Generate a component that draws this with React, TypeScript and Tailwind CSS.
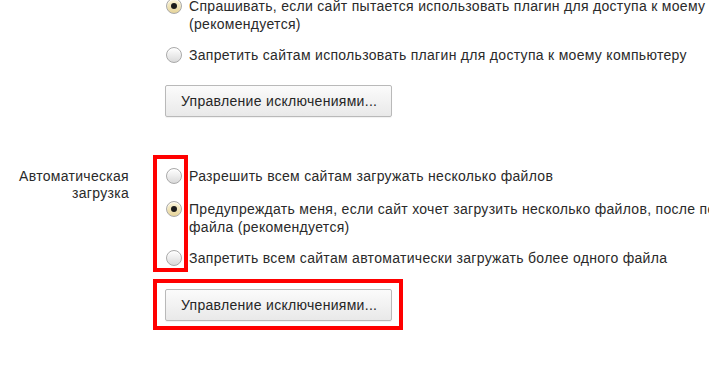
import type { ReactNode } from 'react';

type RadioProps = {
    checked?: boolean;
};

function Radio({ checked = false }: RadioProps) {
    return (
        <span
            className={`mt-[1px] flex h-[16px] w-[16px] shrink-0 items-center justify-center rounded-full border border-[#a9a9a9] shadow-[inset_0_1px_1px_rgba(255,255,255,0.9)] ${
                checked
                    ? 'bg-gradient-to-b from-[#fbf4d8] to-[#e6d49a]'
                    : 'bg-gradient-to-b from-[#ffffff] to-[#dadada]'
            }`}
        >
            {checked && <span className="h-[6px] w-[6px] rounded-full bg-[#1b1b1b]" />}
        </span>
    );
}

type OptionProps = {
    checked?: boolean;
    className?: string;
    children: ReactNode;
};

function Option({ checked, className = '', children }: OptionProps) {
    return (
        <div className={`flex items-start gap-[7px] ${className}`}>
            <Radio checked={checked} />
            <div className="whitespace-nowrap leading-[18px]">{children}</div>
        </div>
    );
}

function ExceptionsButton({ className = '' }: { className?: string }) {
    return (
        <button
            className={`flex h-[32px] w-[227px] items-center rounded-[2px] border border-[#b9b9b9] bg-gradient-to-b from-[#fbfbfb] to-[#e9e9e9] pl-[15px] text-[14px] tracking-[0.3px] text-[#262626] shadow-[0_1px_1px_rgba(0,0,0,0.06)] ${className}`}
        >
            Управление исключениями...
        </button>
    );
}

export default function App() {
    return (
        <div
            className="relative h-[367px] w-[709px] overflow-hidden bg-white text-[14px] tracking-[0.3px] text-[#2a2a2a]"
            style={{ fontFamily: '"Liberation Sans", Arial, sans-serif' }}
        >
            <div className="mt-[-3px]">
                {/* plugins section */}
                <div className="flex">
                    <div className="w-[166px] shrink-0" />
                    <div>
                        <Option checked>
                            Спрашивать, если сайт пытается использовать плагин для доступа к моему компьютеру
                            <br />
                            (рекомендуется)
                        </Option>
                        <Option className="mt-[13px]">
                            Запретить сайтам использовать плагин для доступа к моему компьютеру
                        </Option>
                        <ExceptionsButton className="mt-[21px] -ml-[1px]" />
                    </div>
                </div>

                {/* automatic downloads section */}
                <div className="mt-[50px] flex">
                    <div className="w-[166px] shrink-0 pr-[37px] pt-[1px] text-right leading-[17px]">
                        Автоматическая
                        <br />
                        загрузка
                    </div>
                    <div>
                        <Option>Разрешить всем сайтам загружать несколько файлов</Option>
                        <Option checked className="mt-[15px]">
                            Предупреждать меня, если сайт хочет загрузить несколько файлов, после первого
                            <br />
                            файла (рекомендуется)
                        </Option>
                        <Option className="mt-[13px]">
                            Запретить всем сайтам автоматически загружать более одного файла
                        </Option>
                        <ExceptionsButton className="mt-[22px] -ml-[1px]" />
                    </div>
                </div>
            </div>

            {/* red annotation frames */}
            <div className="absolute left-[153px] top-[155px] h-[117px] w-[35px] border-4 border-[#ff0000]" />
            <div className="absolute left-[153px] top-[279px] h-[51px] w-[250px] border-4 border-[#ff0000]" />
        </div>
    );
}
